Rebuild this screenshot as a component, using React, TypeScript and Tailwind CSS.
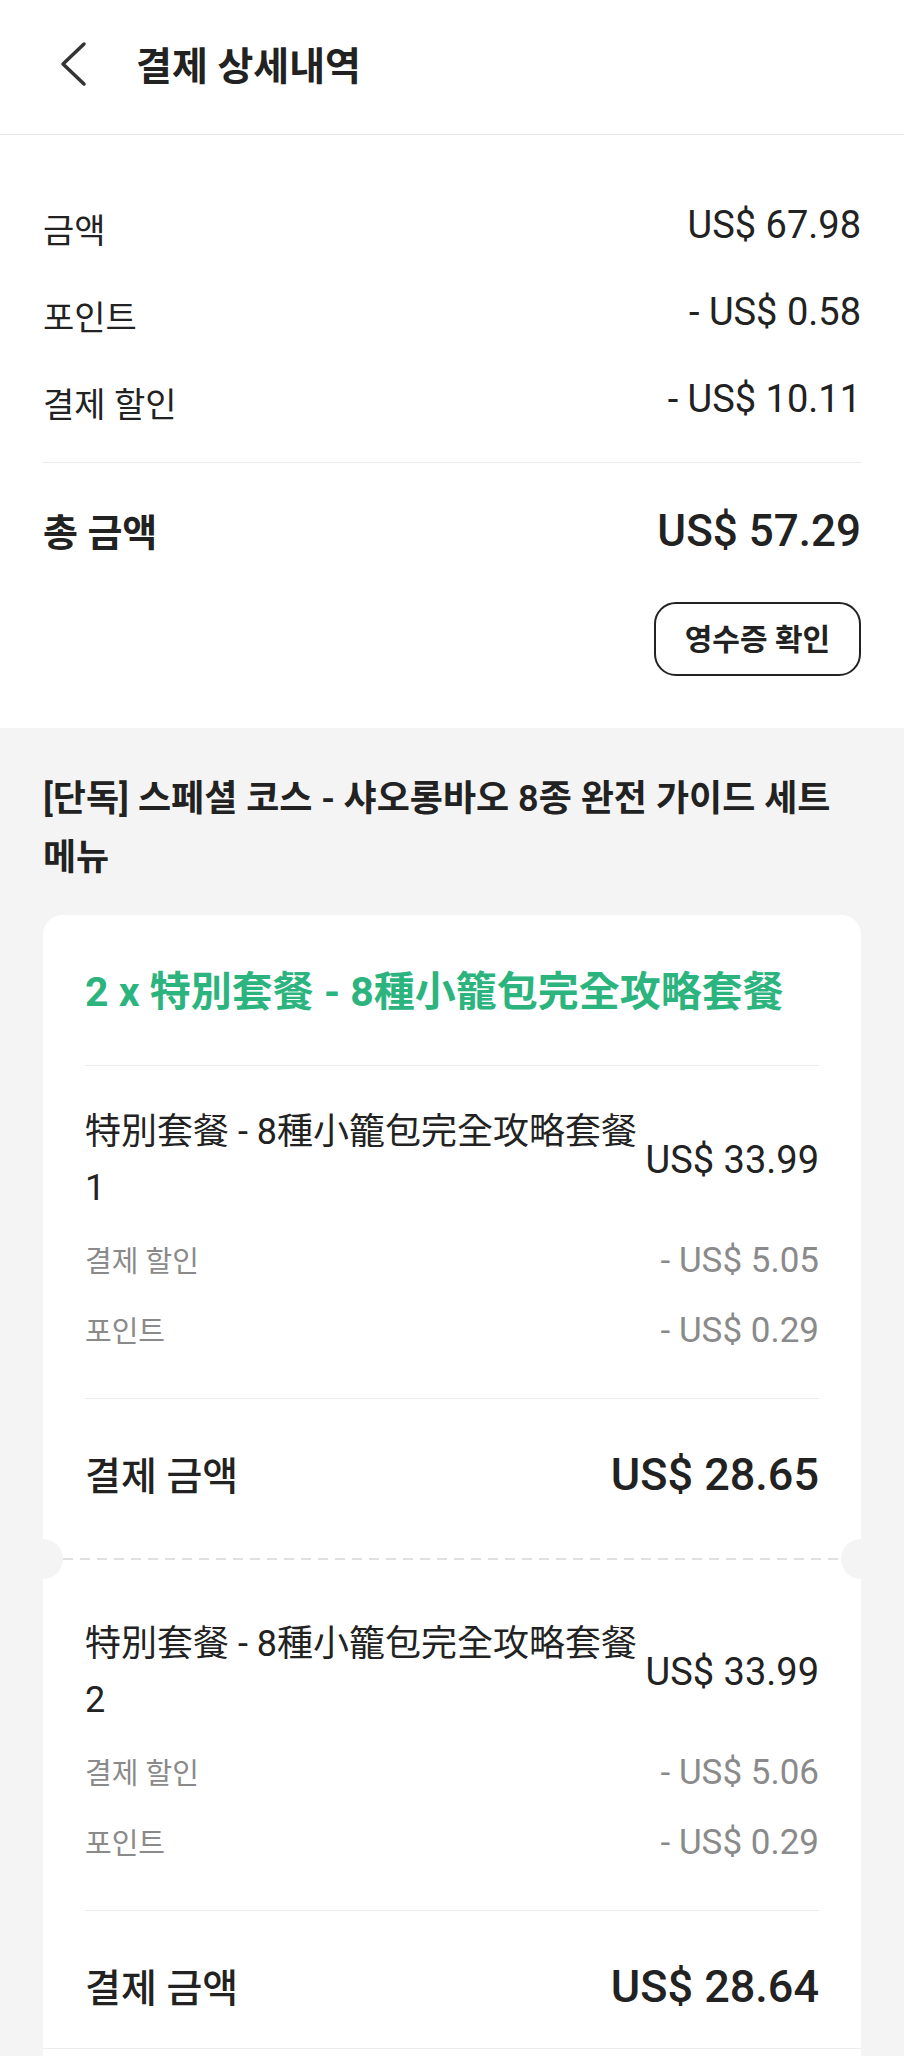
const ITEMS = [
  { no: "1", price: "US$ 33.99", discount: "- US$ 5.05", point: "- US$ 0.29", total: "US$ 28.65" },
  { no: "2", price: "US$ 33.99", discount: "- US$ 5.06", point: "- US$ 0.29", total: "US$ 28.64" },
];

function SummaryRow({ label, value }: { label: string; value: string }) {
  return (
    <div className="flex h-[87px] items-center justify-between">
      <span className="pt-[8px] text-[34px]">{label}</span>
      <span className="pb-[4px] text-[38px]">{value}</span>
    </div>
  );
}

function Perforation() {
  return (
    <div className="relative h-[2px]">
      <div className="mx-[20px] h-[2px] bg-[repeating-linear-gradient(90deg,#e0e0e0_0_10px,transparent_10px_17px)]" />
      <div className="absolute -left-[20px] -top-[19px] h-[40px] w-[40px] rounded-full bg-[#f4f4f4]" />
      <div className="absolute -right-[20px] -top-[19px] h-[40px] w-[40px] rounded-full bg-[#f4f4f4]" />
    </div>
  );
}

function Item({ item, first }: { item: (typeof ITEMS)[number]; first: boolean }) {
  return (
    <div className={first ? "px-[42px] pt-[38px] pb-[53px]" : "px-[42px] pt-[56px]"}>
      <div className="flex items-center">
        <p className="min-w-0 flex-1 text-[36px] leading-[56px]">
          特別套餐 - 8種小籠包完全攻略套餐 {item.no}
        </p>
        <span className="shrink-0 text-[38px]">{item.price}</span>
      </div>

      <div className="mt-[10px] text-[#8a8a8a]">
        <div className="flex h-[70px] items-center justify-between">
          <span className="pt-[4px] text-[29px]">결제 할인</span>
          <span className="text-[35px]">{item.discount}</span>
        </div>
        <div className="flex h-[70px] items-center justify-between">
          <span className="pt-[4px] text-[29px]">포인트</span>
          <span className="text-[35px]">{item.point}</span>
        </div>
      </div>

      <div className="mt-[32px] h-px bg-[#ececec]" />

      <div className="mt-[46px] flex h-[60px] items-center justify-between">
        <span className="pt-[4px] text-[39px] font-medium">결제 금액</span>
        <span className="text-[45px] font-medium">{item.total}</span>
      </div>
    </div>
  );
}

export default function App() {
  return (
    <div className="min-h-screen bg-[#f4f4f4] font-['Roboto','Noto_Sans_CJK_KR',sans-serif] text-[#222]">
      {/* Header */}
      <header className="flex h-[135px] items-center border-b border-[#e8e8e8] bg-white">
        <svg
          className="mb-[6px] ml-[59px] h-[46px] w-[28px]"
          viewBox="0 0 28 46"
          fill="none"
          stroke="#333"
          strokeWidth="3.5"
          strokeLinecap="round"
          strokeLinejoin="round"
        >
          <path d="M25 3 L4 23 L25 43" />
        </svg>
        <h1 className="ml-[49px] text-[39px] font-bold">결제 상세내역</h1>
      </header>

      {/* Summary */}
      <section className="bg-white px-[43px] pt-[49px] pb-[52px]">
        <SummaryRow label="금액" value="US$ 67.98" />
        <SummaryRow label="포인트" value="- US$ 0.58" />
        <SummaryRow label="결제 할인" value="- US$ 10.11" />

        <div className="mt-[17px] h-px bg-[#ececec]" />

        <div className="mt-[40px] flex h-[56px] items-center justify-between">
          <span className="pt-[4px] text-[38px] font-bold">총 금액</span>
          <span className="text-[44px] font-medium">US$ 57.29</span>
        </div>

        <div className="mt-[43px] flex justify-end">
          <button className="h-[74px] w-[207px] rounded-[22px] border-[2.5px] border-[#222] bg-white text-[30px] font-bold">
            영수증 확인
          </button>
        </div>
      </section>

      {/* Order detail */}
      <section className="px-[43px] pt-[42px]">
        <h2 className="text-[36px] font-semibold leading-[59px]">
          [단독] 스페셜 코스 - 샤오롱바오 8종 완전 가이드 세트 메뉴
        </h2>

        <div className="mt-[27px] rounded-[20px] bg-white pb-[40px]">
          <div className="px-[42px] pt-[49px]">
            <h3 className="text-[41px] font-bold leading-[56px] text-[#2bb47e]">
              2 x 特別套餐 - 8種小籠包完全攻略套餐
            </h3>
            <div className="mt-[45px] h-px bg-[#ececec]" />
          </div>

          <Item item={ITEMS[0]} first />
          <Perforation />
          <Item item={ITEMS[1]} first={false} />

          <div className="mt-[31px] h-px bg-[#ececec]" />
        </div>
      </section>
    </div>
  );
}
